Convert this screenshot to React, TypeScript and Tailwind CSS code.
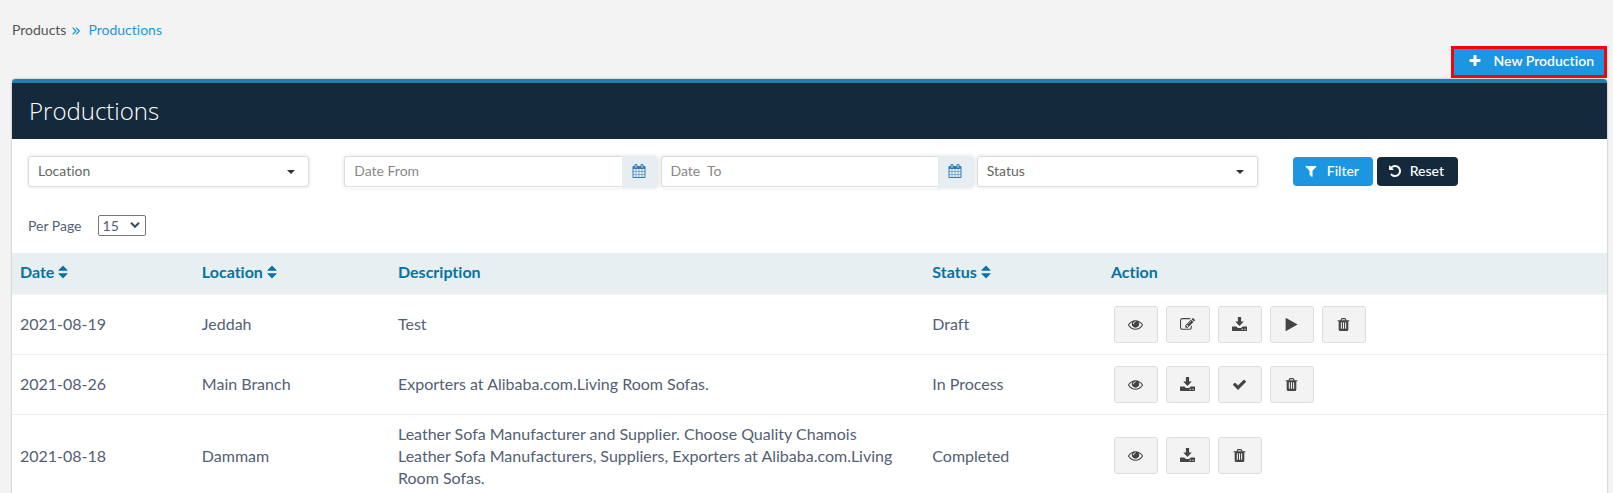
import React, { useState } from 'react';
import clsx from 'clsx';

type IconName =
    | 'plus'
    | 'filter'
    | 'undo'
    | 'calendar'
    | 'sort'
    | 'view'
    | 'edit'
    | 'play'
    | 'check'
    | 'trash';

type ActionName = 'view' | 'edit' | 'download' | 'play' | 'check' | 'trash';

type Production = {
    date: string;
    location: string;
    description: string;
    status: string;
    actions: ActionName[];
};

const iconPaths: Record<IconName, string> = {
    plus: 'M1600 736v192q0 40-28 68t-68 28h-416v416q0 40-28 68t-68 28h-192q-40 0-68-28t-28-68v-416h-416q-40 0-68-28t-28-68v-192q0-40 28-68t68-28h416v-416q0-40 28-68t68-28h192q40 0 68 28t28 68v416h416q40 0 68 28t28 68z',
    filter: 'M1595 295q17 41-14 70l-493 493v742q0 42-39 59-13 5-25 5-27 0-45-19l-256-256q-19-19-19-45v-486l-493-493q-31-29-14-70 17-39 59-39h1280q42 0 59 39z',
    undo: 'M1664 896q0 156-61 298t-164 245-245 164-298 61q-172 0-327-72.5t-264-204.5q-7-10-6.5-22.5t8.5-20.5l137-138q10-9 25-9 16 2 23 12 73 95 179 147t225 52q104 0 198.5-40.5t163.5-109.5 109.5-163.5 40.5-198.5-40.5-198.5-109.5-163.5-163.5-109.5-198.5-40.5q-98 0-188 35.5t-160 101.5l137 138q31 30 14 69-17 40-59 40h-448q-26 0-45-19t-19-45v-448q0-42 40-59 39-17 69 14l130 129q107-101 244.5-156.5t284.5-55.5q156 0 298 61t245 164 164 245 61 298z',
    calendar: 'M192 1664h288v-288h-288v288zm352 0h320v-288h-320v288zm-352-352h288v-320h-288v320zm352 0h320v-320h-320v320zm-352-384h288v-288h-288v288zm736 736h320v-288h-320v288zm-384-736h320v-288h-320v288zm768 736h288v-288h-288v288zm-384-352h320v-320h-320v320zm-352-864v-288q0-13-9.5-22.5t-22.5-9.5h-64q-13 0-22.5 9.5t-9.5 22.5v288q0 13 9.5 22.5t22.5 9.5h64q13 0 22.5-9.5t9.5-22.5zm736 864h288v-320h-288v320zm-384-384h320v-288h-320v288zm384 0h288v-288h-288v288zm32-480v-288q0-13-9.5-22.5t-22.5-9.5h-64q-13 0-22.5 9.5t-9.5 22.5v288q0 13 9.5 22.5t22.5 9.5h64q13 0 22.5-9.5t9.5-22.5zm384-64v1280q0 52-38 90t-90 38h-1408q-52 0-90-38t-38-90v-1280q0-52 38-90t90-38h128v-96q0-66 47-113t113-47h64q66 0 113 47t47 113v96h384v-96q0-66 47-113t113-47h64q66 0 113 47t47 113v96h128q52 0 90 38t38 90z',
    sort: 'M1408 1088q0 26-19 45l-448 448q-19 19-45 19t-45-19l-448-448q-19-19-19-45t19-45 45-19h896q26 0 45 19t19 45zm0-384q0 26-19 45t-45 19h-896q-26 0-45-19t-19-45 19-45l448-448q19-19 45-19t45 19l448 448q19 19 19 45z',
    view: 'M1664 960q-152-236-381-353 61 104 61 225 0 185-131.5 316.5t-316.5 131.5-316.5-131.5-131.5-316.5q0-121 61-225-229 117-381 353 133 205 333.5 326.5t434.5 121.5 434.5-121.5 333.5-326.5zm-720-384q0-20-14-34t-34-14q-125 0-214.5 89.5t-89.5 214.5q0 20 14 34t34 14 34-14 14-34q0-86 61-147t147-61q20 0 34-14t14-34zm848 384q0 34-20 69-140 230-376.5 368.5t-499.5 138.5-499.5-139-376.5-368q-20-35-20-69t20-69q140-229 376.5-368t499.5-139 499.5 139 376.5 368q20 35 20 69z',
    edit: 'M888 1184l116-116-152-152-116 116v56h96v96h56zm440-720q-16-16-33 1l-350 350q-17 17-1 33t33-1l350-350q17-17 1-33zm80 594v190q0 119-84.5 203.5t-203.5 84.5h-832q-119 0-203.5-84.5t-84.5-203.5v-832q0-119 84.5-203.5t203.5-84.5h832q63 0 117 25 15 7 18 23 3 17-9 29l-49 49q-14 14-32 8-23-6-45-6h-832q-66 0-113 47t-47 113v832q0 66 47 113t113 47h832q66 0 113-47t47-113v-126q0-13 9-22l64-64q15-15 35-7t20 29zm-96-738l288 288-672 672h-288v-288zm444 132l-92 92-288-288 92-92q28-28 68-28t68 28l152 152q28 28 28 68t-28 68z',
    play: 'M1576 927l-1328 738q-23 13-39.5 3t-16.5-36v-1472q0-26 16.5-36t39.5 3l1328 738q23 13 23 31t-23 31z',
    check: 'M1671 566q0 40-28 68l-724 724-136 136q-28 28-68 28t-68-28l-136-136-362-362q-28-28-28-68t28-68l136-136q28-28 68-28t68 28l294 295 656-657q28-28 68-28t68 28l136 136q28 28 28 68z',
    trash: 'M704 1376v-704q0-14-9-23t-23-9h-64q-14 0-23 9t-9 23v704q0 14 9 23t23 9h64q14 0 23-9t9-23zm256 0v-704q0-14-9-23t-23-9h-64q-14 0-23 9t-9 23v704q0 14 9 23t23 9h64q14 0 23-9t9-23zm256 0v-704q0-14-9-23t-23-9h-64q-14 0-23 9t-9 23v704q0 14 9 23t23 9h64q14 0 23-9t9-23zm-544-992h448l-48-117q-7-9-17-11h-317q-10 2-17 11zm928 32v64q0 14-9 23t-23 9h-96v948q0 83-47 143.5t-113 60.5h-832q-66 0-113-58.5t-47-141.5v-952h-96q-14 0-23-9t-9-23v-64q0-14 9-23t23-9h309l70-167q15-37 54-63t79-26h320q40 0 79 26t54 63l70 167h309q14 0 23 9t9 23z',
};

const productions: Production[] = [
    {
        date: '2021-08-19',
        location: 'Jeddah',
        description: 'Test',
        status: 'Draft',
        actions: ['view', 'edit', 'download', 'play', 'trash'],
    },
    {
        date: '2021-08-26',
        location: 'Main Branch',
        description: 'Exporters at Alibaba.com.Living Room Sofas.',
        status: 'In Process',
        actions: ['view', 'download', 'check', 'trash'],
    },
    {
        date: '2021-08-18',
        location: 'Dammam',
        description:
            'Leather Sofa Manufacturer and Supplier. Choose Quality Chamois Leather Sofa Manufacturers, Suppliers, Exporters at Alibaba.com.Living Room Sofas.',
        status: 'Completed',
        actions: ['view', 'download', 'trash'],
    },
];

const columns = [
    { label: 'Date', sortable: true, width: 'w-[11.4%]' },
    { label: 'Location', sortable: true, width: 'w-[12.3%]' },
    { label: 'Description', sortable: false, width: 'w-[33.5%]' },
    { label: 'Status', sortable: true, width: 'w-[11.2%]' },
    { label: 'Action', sortable: false, width: '' },
];

const Icon = ({ name, className = 'size-3.5' }: { name: IconName; className?: string }) => (
    <svg viewBox="0 0 1792 1792" fill="currentColor" className={clsx('shrink-0', className)} aria-hidden="true">
        <path d={iconPaths[name]} />
    </svg>
);

const DownloadIcon = () => (
    <svg viewBox="0 0 14 14" fill="currentColor" className="size-[15px] shrink-0" aria-hidden="true">
        <path d="M5.5 0h3v4.200H11L7 8.400 3 4.200h2.500z" />
        <path
            fillRule="evenodd"
            d="M.4 8.800H4l1.600 1.400h2.800L10 8.800h3.600l.4.4v3.400l-.4.4H.4l-.4-.4V9.200zM9 11v1h1.200v-1zm2.600 0v1h1.200v-1z"
        />
    </svg>
);

const Caret = () => (
    <span className="pointer-events-none absolute right-3.5 top-3.5 border-x-4 border-t-4 border-x-transparent border-t-[#333]" />
);

type FilterSelectProps = {
    label: string;
    options: string[];
};

const FilterSelect: React.FC<FilterSelectProps> = ({ label, options }) => (
    <div className="relative mr-[35px]">
        <select
            aria-label={label}
            defaultValue=""
            className="block h-[31px] w-full appearance-none rounded-[3px] border border-[#ddd] bg-white px-[9px] pb-px text-sm text-[#666] shadow-[0_0_4px_rgba(0,0,0,0.12)]"
        >
            <option value="">{label}</option>
            {options.map((o) => (
                <option key={o}>{o}</option>
            ))}
        </select>
        <Caret />
    </div>
);

const DateField = ({ label, placeholder }: { label: string; placeholder: string }) => (
    <div className="mr-[3px] flex h-8 rounded shadow-[0_0_4px_rgba(0,0,0,0.12)]">
        <input
            type="text"
            aria-label={label}
            placeholder={placeholder}
            className="h-[31px] min-w-0 flex-1 rounded-l-[3px] border border-r-0 border-[#ddd] bg-white px-[9px] pb-[3px] text-sm text-[#555] placeholder:text-[#888]"
        />
        <button
            type="button"
            aria-label={`Pick ${label}`}
            className="flex w-9 items-center justify-center rounded-r bg-[#e6eef2] pb-0.5 pr-px text-[#337ab7]"
        >
            <Icon name="calendar" />
        </button>
    </div>
);

export default function App() {
    const [perPage, setPerPage] = useState('15');

    return (
        <div className="min-h-screen bg-[#f3f3f3] pl-3 pr-1.5 pt-5 font-[Lato,sans-serif] text-sm text-[#536074] [font-variant-ligatures:none]">
            <nav aria-label="Breadcrumb" className="flex h-5 items-center text-[#555]">
                <a href="#products">Products</a>
                <svg viewBox="0 0 8 8" fill="none" stroke="#1d96e2" strokeWidth="1.300" className="ml-1.5 mr-2 mt-0.5 size-2">
                    <path d="M.6.6 4 4 .6 7.400M4 .6 7.400 4 4 7.400" />
                </svg>
                <a href="#productions" className="text-[#1d96e2]">
                    Productions
                </a>
            </nav>

            <div className="mb-px mt-1.5 flex justify-end">
                <button
                    type="button"
                    className="flex h-8 items-center gap-3 border-3 border-[#fb0007] bg-[#1d96e2] pb-0.5 pl-3.5 pr-2.5 font-semibold text-white"
                >
                    <Icon name="plus" />
                    New Production
                </button>
            </div>

            <section className="rounded-t border-t-4 border-[#217dab] bg-white shadow-[0_0_2px_rgba(0,0,0,0.4)]">
                <h1 className="bg-[#15293d] px-[17px] py-2.5 font-['Open_Sans',sans-serif] text-2xl leading-9 font-light text-white">
                    Productions
                </h1>

                <form className="grid grid-cols-[repeat(4,1fr)_314px] pl-4 pt-[17px]" onSubmit={(e) => e.preventDefault()}>
                    <FilterSelect label="Location" options={['Jeddah', 'Main Branch', 'Dammam']} />
                    <DateField label="Date From" placeholder="Date From" />
                    <DateField label="Date To" placeholder={'Date \u00a0To'} />
                    <FilterSelect label="Status" options={['Draft', 'In Process', 'Completed']} />
                    <div className="flex items-start gap-1 pt-px font-medium text-white">
                        <button type="submit" className="flex h-[29px] w-20 items-center justify-between rounded bg-[#1d96e2] pb-0.5 pl-[11px] pr-3.5">
                            <Icon name="filter" />
                            Filter
                        </button>
                        <button type="reset" className="flex h-[29px] w-[81px] items-center justify-between rounded bg-[#15293d] pb-0.5 pl-[11px] pr-3.5">
                            <Icon name="undo" />
                            Reset
                        </button>
                    </div>
                </form>

                <div className="flex items-center gap-4 px-4 pb-[17px] pt-[27px]">
                    <label htmlFor="per-page">Per Page</label>
                    <div className="relative">
                        <select
                            id="per-page"
                            value={perPage}
                            onChange={(e) => setPerPage(e.target.value)}
                            className="block h-[21px] w-12 appearance-none rounded-xs border border-[#767676] bg-white px-1 text-sm leading-4"
                        >
                            <option>15</option>
                            <option>30</option>
                            <option>50</option>
                        </select>
                        <svg viewBox="0 0 10 6" fill="none" stroke="#3c4a5e" strokeWidth="2" className="pointer-events-none absolute right-1.5 top-[7px] h-1.5 w-2.5">
                            <path d="M1 .8 5 4.800 9 .8" />
                        </svg>
                    </div>
                </div>

                <table className="w-full table-fixed text-left text-base leading-[22px]">
                    <thead>
                        <tr className="border-b-2 border-[#f1f3f3] bg-[#e7eff1] text-[#0473a5]">
                            {columns.map((col) => (
                                <th key={col.label} scope="col" className={clsx('px-2 pb-2.5 pt-2 font-bold', col.width)}>
                                    {col.sortable ? (
                                        <button type="button" className="flex items-center gap-px">
                                            {col.label}
                                            <Icon name="sort" className="size-4" />
                                        </button>
                                    ) : (
                                        col.label
                                    )}
                                </th>
                            ))}
                        </tr>
                    </thead>
                    <tbody>
                        {productions.map((row) => (
                            <tr key={row.date} className="h-[60px] border-b border-[#eee]">
                                <td className="px-2">{row.date}</td>
                                <td className="px-2">{row.location}</td>
                                <td className="py-2 pl-2 pr-7">{row.description}</td>
                                <td className="px-2">{row.status}</td>
                                <td className="px-2">
                                    <div className="flex gap-2 pl-[3px]">
                                        {row.actions.map((action) => (
                                            <button
                                                key={action}
                                                type="button"
                                                aria-label={action}
                                                className="flex h-[37px] w-11 items-center justify-center rounded-[3px] border border-[#ddd] bg-[#f3f3f3] text-[#444]"
                                            >
                                                {action === 'download' ? <DownloadIcon /> : <Icon name={action} className="size-[15px]" />}
                                            </button>
                                        ))}
                                    </div>
                                </td>
                            </tr>
                        ))}
                    </tbody>
                </table>
            </section>
        </div>
    );
}
